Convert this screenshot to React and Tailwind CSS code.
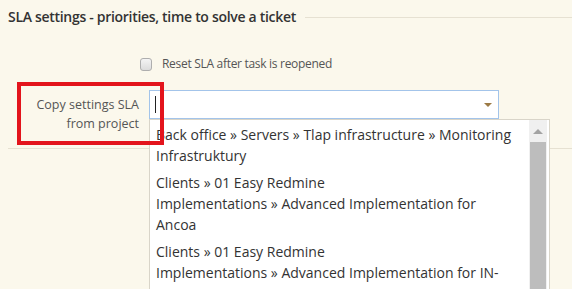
function Checkbox() {
  return (
    <span className="inline-block w-[12px] h-[13px] rounded-[3px] border border-[#aeaeae] bg-gradient-to-b from-[#f4f4f4] to-[#dcdcdc]" />
  );
}

function Scrollbar() {
  return (
    <div className="absolute top-0 bottom-0 right-[2px] w-[18px] bg-[#f0f0f0] flex flex-col">
      <div className="h-[22px] flex items-center justify-center">
        <span className="w-0 h-0 border-l-[5px] border-r-[5px] border-b-[5px] border-l-transparent border-r-transparent border-b-[#a3a3a3]" />
      </div>
      <div className="flex-1 mx-[1px] bg-[#bdbdbd]" />
    </div>
  );
}

const options = [
  ["Back office » Servers » Tlap infrastructure » Monitoring", "Infrastruktury"],
  ["Clients » 01 Easy Redmine", "Implementations » Advanced Implementation for", "Ancoa"],
  ["Clients » 01 Easy Redmine", "Implementations » Advanced Implementation for IN-"],
];

function App() {
  return (
    <div className="relative h-screen overflow-hidden bg-[#fbf8ec] font-['Open_Sans',sans-serif] text-[#555]">
      {/* Nadpis sekce */}
      <div className="flex items-center pl-[8px] pt-[6px]">
        <h3 className="text-[14px] leading-[22px] font-semibold tracking-[-0.3px] text-[#333] whitespace-nowrap">
          SLA settings - priorities, time to solve a ticket
        </h3>
        <div className="flex-1 ml-[9px] border-t border-[#e6e1d2]" />
      </div>

      <div className="flex items-center gap-[10px] pl-[140px] mt-[27px]">
        <Checkbox />
        <span className="text-[12px] leading-[18px] tracking-[-0.3px]">Reset SLA after task is reopened</span>
      </div>

      <div className="ml-[8px] border-b border-[#e6e1d2] pb-[15px] mt-[17px] flex">
        <label className="w-[131px] pt-[5px] text-right text-[12.5px] leading-[19px]">
          Copy settings SLA
          <br />
          from project
        </label>
        <div className="relative ml-[10px] w-[350px] h-[29px] bg-white border border-[#a3c4ea]">
          <span className="absolute left-[5px] top-[5px] w-[1px] h-[17px] bg-[#222]" />
          <span className="absolute right-[6px] top-[12px] w-0 h-0 border-l-[4px] border-r-[4px] border-t-[4px] border-l-transparent border-r-transparent border-t-[#9c7a45]" />

          {/* rozbalovací seznam */}
          <div className="absolute left-[-1px] top-[28px] w-[401px] h-[200px] bg-white border border-[#d9d5c9] z-10 overflow-hidden">
            <div className="pt-[1px] pr-[24px] text-[14px] leading-[21px] text-[#333]">
              {options.map((lines, i) => (
                <div key={i} className="px-[6px] py-[3px]">
                  {lines.map((l, j) => (
                    <div key={j} className="whitespace-nowrap">{l}</div>
                  ))}
                </div>
              ))}
            </div>
            <Scrollbar />
          </div>
        </div>
      </div>

      {/* červené zvýraznění */}
      <div className="absolute left-[17px] top-[82px] w-[147px] h-[63px] border-[4px] border-[#e3141c] z-20" />
    </div>
  );
}

export default App;
